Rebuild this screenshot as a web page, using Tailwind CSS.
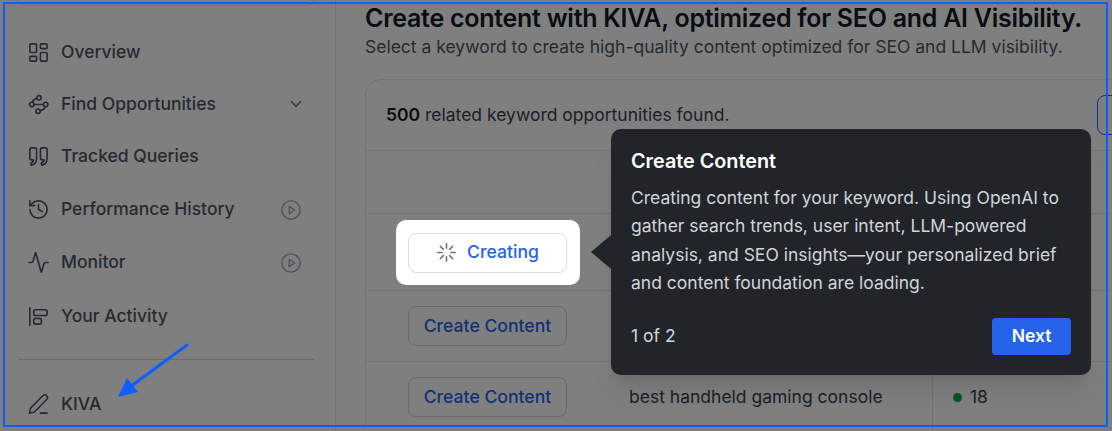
<!doctype html>
<html>
<head>
<meta charset="utf-8">
<script src="https://cdn.jsdelivr.net/npm/@tailwindcss/browser@4"></script>
</head>
<body class="m-0">
<div class="relative w-[1112px] h-[431px] overflow-hidden bg-white font-['Inter',sans-serif] flex">
  <!-- sidebar -->
  <aside class="w-[336px] shrink-0 h-full border-r border-[#e5e7eb] pl-[18px] pr-[21px] flex flex-col text-[#4b5563] text-[17.5px] font-medium">
    <div class="h-[7px] -mt-px border border-[#e5e7eb] rounded-b-xl shrink-0"></div>
    <nav class="flex flex-col pl-[9px] pr-[12px] mt-[21px]">
      <a class="h-[51px] flex items-center gap-[11px]">
        <svg class="w-[23px] h-[23px]" viewBox="0 0 24 24" fill="none" stroke="currentColor" stroke-width="1.700" stroke-linejoin="round"><rect x="3" y="3" width="7" height="9" rx="1"/><rect x="14" y="3" width="7" height="5" rx="1"/><rect x="14" y="12" width="7" height="9" rx="1"/><rect x="3" y="16" width="7" height="5" rx="1"/></svg>
        <span>Overview</span>
      </a>
      <a class="h-[52px] flex items-center gap-[11px]">
        <svg class="w-[23px] h-[23px]" viewBox="0 0 24 24" fill="none" stroke="currentColor" stroke-width="1.700" stroke-linecap="round"><circle cx="12.500" cy="5" r="2.300"/><circle cx="5" cy="12" r="2.300"/><circle cx="19.500" cy="12" r="2.300"/><circle cx="11.500" cy="19" r="2.300"/><path d="M7.300 12h9.900M10.300 5.500C7.500 6.200 6 7.500 5.500 9.700M13.700 18.500c2.800-.7 4.800-2 5.300-4.200"/></svg>
        <span>Find Opportunities</span>
        <svg class="w-[18px] h-[18px] ml-auto -mr-[3px] text-[#6b7280]" viewBox="0 0 24 24" fill="none" stroke="currentColor" stroke-width="2" stroke-linecap="round" stroke-linejoin="round"><path d="m6 9 6 6 6-6"/></svg>
      </a>
      <a class="h-[53px] flex items-center gap-[11px]">
        <svg class="w-[23px] h-[23px]" viewBox="0 0 24 24" fill="none" stroke="currentColor" stroke-width="1.700" stroke-linejoin="round" stroke-linecap="round"><path d="M5 3h3.500A1.500 1.500 0 0 1 10 4.500V14c0 3.800-2 6.300-5.500 7L3.700 19c2-.6 3-1.700 3.100-3.500H5A2 2 0 0 1 3 13.500V5a2 2 0 0 1 2-2Z"/><path d="M16 3h3.500A1.500 1.500 0 0 1 21 4.500V14c0 3.800-2 6.300-5.500 7L14.700 19c2-.6 3-1.700 3.100-3.500H16A2 2 0 0 1 14 13.500V5a2 2 0 0 1 2-2Z"/></svg>
        <span>Tracked Queries</span>
      </a>
      <a class="h-[53px] flex items-center gap-[11px]">
        <svg class="w-[23px] h-[23px]" viewBox="0 0 24 24" fill="none" stroke="currentColor" stroke-width="1.700" stroke-linecap="round" stroke-linejoin="round"><path d="M3 12a9 9 0 1 0 9-9 9.750 9.750 0 0 0-6.740 2.740L3 8"/><path d="M3 3v5h5"/><path d="M12 7v5l4 2"/></svg>
        <span>Performance History</span>
        <svg class="w-[22px] h-[22px] ml-auto text-[#9ca3af]" viewBox="0 0 24 24" fill="none" stroke="currentColor" stroke-width="1.500" stroke-linejoin="round"><circle cx="12" cy="12" r="10"/><path d="m10 8 6 4-6 4Z"/></svg>
      </a>
      <a class="h-[53px] flex items-center gap-[11px]">
        <svg class="w-[23px] h-[23px]" viewBox="0 0 24 24" fill="none" stroke="currentColor" stroke-width="1.700" stroke-linecap="round" stroke-linejoin="round"><path d="M22 12h-2.480a2 2 0 0 0-1.930 1.460l-2.350 8.360a.25.25 0 0 1-.48 0L9.240 2.180a.25.25 0 0 0-.48 0l-2.350 8.360A2 2 0 0 1 4.490 12H2"/></svg>
        <span>Monitor</span>
        <svg class="w-[22px] h-[22px] ml-auto text-[#9ca3af]" viewBox="0 0 24 24" fill="none" stroke="currentColor" stroke-width="1.500" stroke-linejoin="round"><circle cx="12" cy="12" r="10"/><path d="m10 8 6 4-6 4Z"/></svg>
      </a>
      <a class="h-[54px] flex items-center gap-[11px]">
        <svg class="w-[23px] h-[23px]" viewBox="0 0 24 24" fill="none" stroke="currentColor" stroke-width="1.700" stroke-linecap="round" stroke-linejoin="round"><path d="M3 3v18"/><rect x="7" y="5" width="14" height="6" rx="2"/><rect x="7" y="14" width="8" height="6" rx="2"/></svg>
        <span>Your Activity</span>
      </a>
    </nav>
    <div class="border-t border-[#d1d5db] mt-[16px]"></div>
    <a class="pl-[9px] h-[44px] mt-[22px] flex items-center gap-[11px]">
      <svg class="w-[23px] h-[23px]" viewBox="0 0 24 24" fill="none" stroke="currentColor" stroke-width="1.600" stroke-linecap="round" stroke-linejoin="round"><path d="M14 21h7"/><path d="M20.500 6.800a2.800 2.800 0 0 0-4-4L4 15.500c-.3.300-.5.600-.6 1L2.500 21l4.500-.9c.4-.1.700-.3 1-.6Z"/></svg>
      <span>KIVA</span>
    </a>
  </aside>

  <!-- main -->
  <main class="flex-1 min-w-0 pl-[29px] text-[#111827]">
    <h1 class="text-[25px] leading-[32px] font-semibold mt-[2px] whitespace-nowrap tracking-[-0.27px]">Create content with KIVA, optimized for SEO and AI Visibility.</h1>
    <p class="text-[17.5px] leading-[24px] text-[#4b5563] mt-[1px] whitespace-nowrap">Select a keyword to create high-quality content optimized for SEO and LLM visibility.</p>
    <section class="mt-[20px] w-[800px] border border-[#e5e7eb] rounded-t-2xl">
      <div class="h-[71px] border-b border-[#e5e7eb] pl-[20px] flex items-center text-[17.5px] text-[#374151] relative">
        <span><b class="font-semibold text-[#111827]">500</b> related keyword opportunities found.</span>
        <div class="absolute left-[731px] top-[15px] w-[60px] h-[40px] border-[1.500px] border-[#2563eb] rounded-lg"></div>
      </div>
      <div class="h-[63px] border-b border-[#e5e7eb]"></div>
      <div class="h-[76px] flex items-center pl-[30px] relative z-20 w-fit">
        <div class="bg-white rounded-[10px] pt-[13px] pb-[12px] pl-[12px] pr-[13px]">
          <button class="w-[159px] h-[40px] border border-[#d9dde3] rounded-lg bg-white flex items-center justify-center gap-[10px] text-[#2563eb] text-[17.6px] font-medium">
            <svg class="w-[21px] h-[21px] text-[#6b7280]" viewBox="0 0 24 24" fill="none" stroke="currentColor" stroke-width="1.800" stroke-linecap="round"><path d="M12 2v5M12 17v5M4.900 4.900l3.500 3.500M15.600 15.600l3.500 3.500M2 12h5M17 12h5M4.900 19.100l3.500-3.500M15.600 8.400l3.500-3.500"/></svg>
            Creating
          </button>
        </div>
      </div>
      <div class="h-[71px] border-t border-[#e5e7eb] flex items-center pl-[42px]">
        <button class="w-[159px] h-[40px] border border-[#d1d5db] rounded-lg text-[#2563eb] text-[17.6px] font-medium">Create Content</button>
      </div>
      <div class="h-[71px] border-t border-[#e5e7eb] flex items-center pl-[42px] relative">
        <button class="w-[159px] h-[40px] border border-[#d1d5db] rounded-lg text-[#2563eb] text-[17.6px] font-medium">Create Content</button>
        <span class="ml-[62px] text-[17.5px] text-[#374151] whitespace-nowrap">best handheld gaming console</span>
        <span class="absolute left-[566px] top-0 bottom-0 border-l border-[#e5e7eb]"></span>
        <span class="absolute left-[587px] top-0 bottom-0 flex items-center gap-[8px] text-[17.5px] text-[#374151]"><i class="w-[9px] h-[9px] rounded-full bg-[#16a34a]"></i>18</span>
      </div>
    </section>
  </main>

  <!-- dim overlay -->
  <div class="absolute inset-0 bg-black/50 z-10"></div>

  <!-- tour popover -->
  <div class="absolute z-20 left-[611px] top-[129px] w-[480px] h-[246px] rounded-[10px] bg-[#212429] shadow-xl px-[20px] pt-[20px] text-white">
    <span class="absolute -left-[20px] top-[106px] w-0 h-0 border-y-[17px] border-y-transparent border-r-[20px] border-r-[#212429]"></span>
    <h2 class="text-[19.800px] leading-[24px] font-semibold">Create Content</h2>
    <p class="mt-[10.500px] text-[17.5px] leading-[28.500px] text-[#d1d5db]">Creating content for your keyword. Using OpenAI to gather search trends, user intent, LLM-powered analysis, and SEO insights—your personalized brief and content foundation are loading.</p>
    <div class="mt-[20px] flex items-center justify-between">
      <span class="text-[17.5px] text-[#d1d5db]">1 of 2</span>
      <button class="w-[79px] h-[37px] bg-[#2563eb] rounded-[4px] text-white text-[17.5px] font-semibold">Next</button>
    </div>
  </div>

  <!-- annotation frame and arrow -->
  <div class="absolute z-30 left-[3px] top-[2px] w-[1105px] h-[425px] border-2 border-[#0b5fff] pointer-events-none"></div>
  <svg class="absolute z-30 left-[110px] top-[338px] w-[85px] h-[65px]" viewBox="110 338 85 65" fill="none"><path d="M187 345 130 387" stroke="#0b5fff" stroke-width="3" stroke-linecap="round"/><path d="M118 397 127 378 138 392Z" fill="#0b5fff"/></svg>
</div>
</body>
</html>
